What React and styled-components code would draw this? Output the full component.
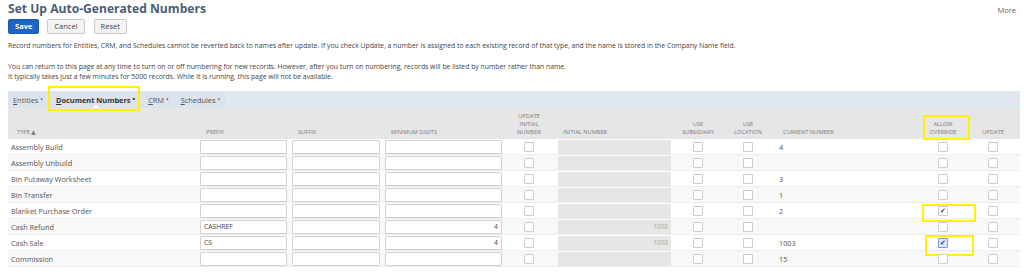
import React from "react";
import styled, { createGlobalStyle } from "styled-components";

const rows = [
  { type: "Assembly Build", current: "4" },
  { type: "Assembly Unbuild", current: "" },
  { type: "Bin Putaway Worksheet", current: "3" },
  { type: "Bin Transfer", current: "1" },
  { type: "Blanket Purchase Order", current: "2", override: true, mark: "po" },
  { type: "Cash Refund", prefix: "CASHREF", digits: "4", initial: "1000" },
  {
    type: "Cash Sale",
    prefix: "CS",
    digits: "4",
    initial: "1000",
    current: "1003",
    override: true,
    focused: true,
    mark: "cs",
  },
  { type: "Commission", current: "15" },
];

const App = () => {
  return (
    <Page>
      <GlobalStyle />
      <TitleBar>
        <Title>Set Up Auto-Generated Numbers</Title>
        <More>More</More>
      </TitleBar>

      <Buttons>
        <Button primary>Save</Button>
        <Button>Cancel</Button>
        <Button>Reset</Button>
      </Buttons>

      <Note>
        Record numbers for Entities, CRM, and Schedules cannot be reverted back
        to names after update. If you check Update, a number is assigned to
        each existing record of that type, and the name is stored in the
        Company Name field.
      </Note>
      <Note>
        You can return to this page at any time to turn on or off numbering for
        new records. However, after you turn on numbering, records will be
        listed by number rather than name.
        <br />
        It typically takes just a few minutes for 5000 records. While it is
        running, this page will not be available.
      </Note>

      <TabBar>
        <TabGroup>
          <Tab>
            <u>E</u>ntities<Dot>•</Dot>
          </Tab>
          <Tab active>
            <u>D</u>ocument Numbers<Dot>•</Dot>
            <Caret />
            <Highlight style={{ left: -1, right: 2, top: -5, bottom: -3 }} />
          </Tab>
          <Tab>
            <u>C</u>RM<Dot>•</Dot>
          </Tab>
          <Tab>
            <u>S</u>chedules<Dot>•</Dot>
          </Tab>
        </TabGroup>
      </TabBar>

      <HeaderRow>
        <HeadCell pad="9px">TYPE ▲</HeadCell>
        <HeadCell pad="8px">PREFIX</HeadCell>
        <HeadCell pad="8px">SUFFIX</HeadCell>
        <HeadCell pad="8px">MINIMUM DIGITS</HeadCell>
        <HeadCell center>
          UPDATE
          <br />
          INITIAL
          <br />
          NUMBER
        </HeadCell>
        <HeadCell pad="10px">INITIAL NUMBER</HeadCell>
        <HeadCell center>
          USE
          <br />
          SUBSIDIARY
        </HeadCell>
        <HeadCell center>
          USE
          <br />
          LOCATION
        </HeadCell>
        <HeadCell pad="7px">CURRENT NUMBER</HeadCell>
        <HeadCell center>
          ALLOW
          <br />
          OVERRIDE
          <Highlight style={{ left: 5, width: 43, top: 7, bottom: -1 }} />
        </HeadCell>
        <HeadCell center>UPDATE</HeadCell>
      </HeaderRow>

      {rows.map((row, i) => (
        <Row key={row.type} alt={i % 2 === 1}>
          <TypeCell>{row.type}</TypeCell>
          <Cell>
            <Field value={row.prefix || ""} readOnly />
          </Cell>
          <Cell>
            <Field value="" readOnly />
          </Cell>
          <Cell>
            <Field value={row.digits || ""} readOnly right />
          </Cell>
          <CheckCell>
            <Box />
          </CheckCell>
          <Cell>
            <Disabled>{row.initial}</Disabled>
          </Cell>
          <CheckCell>
            <Box />
          </CheckCell>
          <CheckCell>
            <Box />
          </CheckCell>
          <TypeCell>{row.current}</TypeCell>
          <CheckCell>
            <Box focused={row.focused}>{row.override && <Tick>✔</Tick>}</Box>
            {row.mark === "po" && (
              <Highlight style={{ left: 4, width: 50, top: 1, height: 14 }} />
            )}
            {row.mark === "cs" && (
              <Highlight style={{ left: 7, width: 45, top: 0, height: 17 }} />
            )}
          </CheckCell>
          <CheckCell>
            <Box />
          </CheckCell>
        </Row>
      ))}
    </Page>
  );
};

const GlobalStyle = createGlobalStyle`
  html, body {
    margin: 0;
    padding: 0;
    background: #fff;
    overflow: hidden;
  }
  body {
    font-family: "Open Sans", "DejaVu Sans", sans-serif;
    color: #444;
  }
`;

const cols = "190px 92px 93px 122px 48px 123px 44px 56px 142px 50px 50px";

const Page = styled.div`
  width: 1012px;
  padding: 0 4px 0 8px;
`;

const TitleBar = styled.div`
  display: flex;
  justify-content: space-between;
  align-items: flex-start;
  height: 18px;
`;

const Title = styled.h1`
  margin: 0;
  font-size: 12.1px;
  line-height: 17px;
  font-weight: 700;
  color: #4d5d73;
`;

const More = styled.span`
  font-size: 7.5px;
  color: #666;
  margin: 5px 4px 0 0;
`;

const Buttons = styled.div`
  display: flex;
  gap: 9px;
  margin-top: 1px;
`;

const Button = styled.button`
  height: 15px;
  padding: 0 ${(p) => (p.primary ? "6px" : "6px")};
  margin-right: ${(p) => (p.primary ? "-1px" : "0")};
  font-family: inherit;
  font-size: 7.5px;
  font-weight: ${(p) => (p.primary ? 700 : 400)};
  line-height: 13px;
  border-radius: 2px;
  border: 1px solid ${(p) => (p.primary ? "#125ab2" : "#c8c8c8")};
  background: ${(p) => (p.primary ? "#1f63c4" : "#f3f3f3")};
  color: ${(p) => (p.primary ? "#fff" : "#444")};
`;

const Note = styled.p`
  margin: 7px 0 0;
  font-size: 6.85px;
  line-height: 10px;
  color: #444;

  & + & {
    margin-top: 11px;
  }
`;

const TabBar = styled.div`
  margin-top: 9px;
  height: 17px;
  background: #e1e7ef;
  display: flex;
`;

const TabGroup = styled.div`
  display: flex;
  align-items: center;
  background: #dce3ec;
  padding: 0 0 0 5px;
`;

const Tab = styled.div`
  position: relative;
  height: 17px;
  display: flex;
  align-items: center;
  padding: 0 ${(p) => (p.active ? "7px" : "6px")};
  font-size: 7.4px;
  font-weight: ${(p) => (p.active ? 700 : 400)};
  color: ${(p) => (p.active ? "#333" : "#555")};

  &:first-child {
    padding-left: 0;
  }
`;

const Dot = styled.span`
  font-size: 7px;
  margin-left: 2px;
`;

const Caret = styled.span`
  position: absolute;
  bottom: 0;
  left: 50%;
  margin-left: -3px;
  border-left: 3px solid transparent;
  border-right: 3px solid transparent;
  border-bottom: 3px solid #fff;
`;

const Highlight = styled.span`
  position: absolute;
  border: 2.5px solid #fff100;
  pointer-events: none;
`;

const HeaderRow = styled.div`
  display: grid;
  grid-template-columns: ${cols};
  height: 31px;
  background: #e6e6e6;
  align-items: end;
`;

const HeadCell = styled.div`
  position: relative;
  height: 100%;
  display: flex;
  flex-direction: column;
  justify-content: flex-end;
  align-items: ${(p) => (p.center ? "center" : "flex-start")};
  text-align: ${(p) => (p.center ? "center" : "left")};
  padding: 0 0 3px ${(p) => p.pad || "0"};
  box-sizing: border-box;
  font-size: 5.7px;
  line-height: 8px;
  color: #7a7a7a;
`;

const Row = styled.div`
  display: grid;
  grid-template-columns: ${cols};
  height: 16px;
  box-sizing: border-box;
  border-bottom: 1px solid #ececec;
  background: ${(p) => (p.alt ? "#f8f8f8" : "#fff")};
  align-items: center;
`;

const Cell = styled.div`
  position: relative;
  display: flex;
  align-items: center;
  height: 100%;
  padding: 0 3px 0 2px;
  box-sizing: border-box;
`;

const TypeCell = styled(Cell)`
  padding-left: 3px;
  font-size: 7.3px;
  color: #555;
`;

const CheckCell = styled(Cell)`
  justify-content: center;
  padding: 0;
`;

const Field = styled.input`
  width: 100%;
  height: 14px;
  box-sizing: border-box;
  border: 1px solid #d2d2d2;
  border-radius: 1px;
  background: #fff;
  padding: 0 3px;
  font-family: inherit;
  font-size: 6.8px;
  color: #444;
  text-align: ${(p) => (p.right ? "right" : "left")};
  outline: none;
`;

const Disabled = styled.div`
  flex: 1;
  margin: 0 2px 0 3px;
  height: 14px;
  background: #e6e6e6;
  font-size: 6.5px;
  line-height: 14px;
  color: #a8a8a8;
  text-align: right;
  padding-right: 3px;
`;

const Box = styled.span`
  width: 10px;
  height: 10px;
  box-sizing: border-box;
  border: 1px solid ${(p) => (p.focused ? "#7b9bd0" : "#cccccc")};
  background: ${(p) => (p.focused ? "#dbe6f6" : "#fff")};
  border-radius: 1px;
  display: flex;
  align-items: center;
  justify-content: center;
`;

const Tick = styled.span`
  font-size: 7px;
  line-height: 1;
  color: #2e4d82;
`;

export default App;
